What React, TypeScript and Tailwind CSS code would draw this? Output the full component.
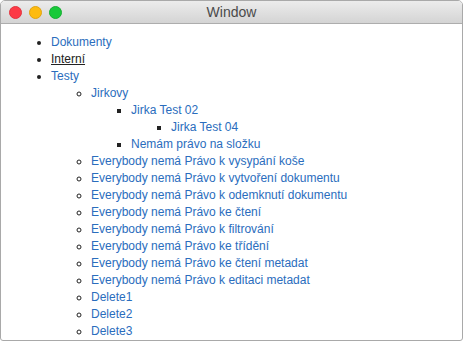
import React from "react";

type Node = { label: string; children?: Node[]; dark?: boolean };

const tree: Node[] = [
  { label: "Dokumenty" },
  { label: "Interní", dark: true },
  {
    label: "Testy",
    children: [
      {
        label: "Jirkovy",
        children: [
          { label: "Jirka Test 02", children: [{ label: "Jirka Test 04" }] },
          { label: "Nemám právo na složku" },
        ],
      },
      { label: "Everybody nemá Právo k vysypání koše" },
      { label: "Everybody nemá Právo k vytvoření dokumentu" },
      { label: "Everybody nemá Právo k odemknutí dokumentu" },
      { label: "Everybody nemá Právo ke čtení" },
      { label: "Everybody nemá Právo k filtrování" },
      { label: "Everybody nemá Právo ke třídění" },
      { label: "Everybody nemá Právo ke čtení metadat" },
      { label: "Everybody nemá Právo k editaci metadat" },
      { label: "Delete1" },
      { label: "Delete2" },
      { label: "Delete3" },
    ],
  },
];

const listStyles = ["list-disc", "list-[circle]", "list-[square]", "list-[square]"];

const Tree: React.FC<{ nodes: Node[]; depth: number }> = ({ nodes, depth }) => (
  <ul className={`${listStyles[depth]} pl-10 marker:text-[#222]`}>
    {nodes.map((n) => (
      <li key={n.label}>
        <a
          href="#"
          className={n.dark ? "text-[#222] underline" : "text-[#2a6dbd] no-underline"}
        >
          {n.label}
        </a>
        {n.children && <Tree nodes={n.children} depth={depth + 1} />}
      </li>
    ))}
  </ul>
);

export default function App() {
  return (
    <div className="w-[463px] h-[341px] overflow-hidden bg-white">
      <div className="h-full flex flex-col border border-[#a9a9a9] rounded-t-[5px] rounded-b-[3px] overflow-hidden">
        <div className="relative h-[23px] shrink-0 flex items-center justify-center bg-gradient-to-b from-[#ececec] to-[#d4d4d4] border-b border-[#adadad]">
          <div className="absolute left-[8px] top-[5px] flex gap-[7px]">
            <span className="w-[13px] h-[13px] rounded-full bg-[#fd3a46] border border-[#e2333e]" />
            <span className="w-[13px] h-[13px] rounded-full bg-[#fdbb0f] border border-[#e0a410]" />
            <span className="w-[13px] h-[13px] rounded-full bg-[#19c93a] border border-[#17ad33]" />
          </div>
          <span className="text-[14px] text-[#4a4a4a] font-['Liberation_Sans',Arial,sans-serif]">
            Window
          </span>
        </div>
        <div className="flex-1 overflow-hidden pt-[10px] pl-[10px] font-['Liberation_Sans',Arial,sans-serif] text-[12px] leading-[17px]">
          <Tree nodes={tree} depth={0} />
        </div>
      </div>
    </div>
  );
}
